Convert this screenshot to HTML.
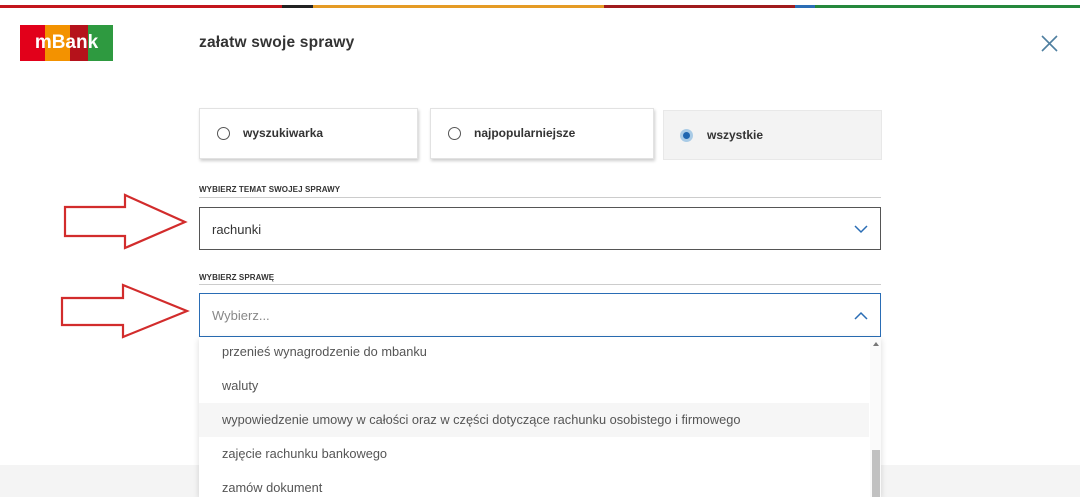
<!DOCTYPE html>
<html><head><meta charset="utf-8"><style>
body{margin:0;width:1080px;height:497px;overflow:hidden;background:#fff;font-family:"Liberation Sans",sans-serif;position:relative;color:#333}
.a{position:absolute}
.bar{top:5px;height:3px}
.rb{position:absolute;box-sizing:border-box;background:#fff;box-shadow:1px 2px 3px rgba(0,0,0,.2);border:1px solid #e2e2e2;font-size:12px;font-weight:bold;color:#333}
.rb .c{position:absolute;left:17px;top:18px;width:11px;height:11px;border:1px solid #555;border-radius:50%}
.lbl{font-size:8px;font-weight:bold;color:#333;letter-spacing:.1px}
.line{height:1px;background:#ccc}
.sel{box-sizing:border-box;font-size:13px}
.it{position:absolute;left:0;width:670px;height:34px;line-height:34px;padding-left:23px;box-sizing:border-box;font-size:12.8px;color:#555}
</style></head><body>
<div class="a bar" style="left:0;width:282px;background:#c3161c"></div>
<div class="a bar" style="left:282px;width:31px;background:#222"></div>
<div class="a bar" style="left:313px;width:291px;background:#e59b25"></div>
<div class="a bar" style="left:604px;width:191px;background:#a01b1d"></div>
<div class="a bar" style="left:795px;width:20px;background:#2a6db5"></div>
<div class="a bar" style="left:815px;width:265px;background:#25883c"></div>

<div class="a" style="left:20px;top:25px;width:93px;height:36px;display:flex">
<div style="width:25px;background:#e2001a"></div><div style="width:25px;background:#f39200"></div><div style="width:18px;background:#b5121b"></div><div style="width:25px;background:#2e9a40"></div></div>
<div class="a" style="left:20px;top:25px;width:93px;height:36px;line-height:36px;text-align:center;color:#fff;font-weight:bold;font-size:19px">mBank</div>
<div class="a" style="left:199px;top:34px;font-size:15.5px;font-weight:bold;color:#333;letter-spacing:.2px">załatw swoje sprawy</div>
<svg class="a" style="left:1041px;top:35px" width="17" height="17"><path d="M1 1L16 16M16 1L1 16" stroke="#4f7fa0" stroke-width="1.6"/></svg>

<div class="rb" style="left:199px;top:108px;width:219px;height:51px"><div class="c"></div><span class="a" style="left:43px;top:17px">wyszukiwarka</span></div>
<div class="rb" style="left:430px;top:108px;width:224px;height:51px"><div class="c"></div><span class="a" style="left:43px;top:17px">najpopularniejsze</span></div>
<div class="a" style="left:663px;top:110px;width:219px;height:50px;background:#f3f3f3;border:1px solid #e8e8e8;box-sizing:border-box;font-size:12px;font-weight:bold">
<div class="a" style="left:16px;top:18px;width:13px;height:13px;border-radius:50%;background:#a9cbe6"></div>
<div class="a" style="left:19px;top:21px;width:7px;height:7px;border-radius:50%;background:#1f66b0"></div>
<span class="a" style="left:43px;top:17px">wszystkie</span></div>

<div class="a lbl" style="left:199px;top:185px">WYBIERZ TEMAT SWOJEJ SPRAWY</div>
<div class="a line" style="left:199px;top:197px;width:682px"></div>
<div class="a sel" style="left:199px;top:207px;width:682px;height:43px;border:1px solid #555"><span class="a" style="left:12px;top:14px">rachunki</span>
<svg class="a" style="left:654px;top:17px" width="14" height="9"><path d="M1 1L7 7L13 1" fill="none" stroke="#2a6db5" stroke-width="1.5"/></svg></div>

<div class="a lbl" style="left:199px;top:273px">WYBIERZ SPRAWĘ</div>
<div class="a line" style="left:199px;top:284px;width:682px"></div>
<div class="a sel" style="left:199px;top:293px;width:682px;height:44px;border:1px solid #2a6db5;color:#888"><span class="a" style="left:12px;top:14px">Wybierz...</span>
<svg class="a" style="left:654px;top:17px" width="14" height="9"><path d="M1 8L7 2L13 8" fill="none" stroke="#2a6db5" stroke-width="1.5"/></svg></div>

<div class="a" style="left:0;top:465px;width:1080px;height:32px;background:#f4f4f4"></div>
<div class="a" style="left:199px;top:337px;width:682px;height:160px;background:#fff;box-shadow:0 2px 6px rgba(0,0,0,.15);overflow:hidden">
<div class="it" style="top:-2px">przenieś wynagrodzenie do mbanku</div>
<div class="it" style="top:32px">waluty</div>
<div class="it" style="top:66px;background:#f6f6f6">wypowiedzenie umowy w całości oraz w części dotyczące rachunku osobistego i firmowego</div>
<div class="it" style="top:100px">zajęcie rachunku bankowego</div>
<div class="it" style="top:134px">zamów dokument</div>
<div class="a" style="left:671px;top:0;width:11px;height:160px;background:#fafafa"></div>
<div class="a" style="left:673px;top:113px;width:8px;height:47px;background:#c1c1c1"></div>
<div class="a" style="left:674px;top:5px;width:0;height:0;border-left:3px solid transparent;border-right:3px solid transparent;border-bottom:4px solid #777"></div>
</div>

<svg class="a" style="left:0;top:0" width="200" height="360">
<path d="M65 207H125V195L185 222L125 248V236H65Z" fill="none" stroke="#d22c2c" stroke-width="2.2"/>
<path d="M62 298H123V285L187 311L123 337V325H62Z" fill="none" stroke="#d22c2c" stroke-width="2.2"/>
</svg>
</body></html>
